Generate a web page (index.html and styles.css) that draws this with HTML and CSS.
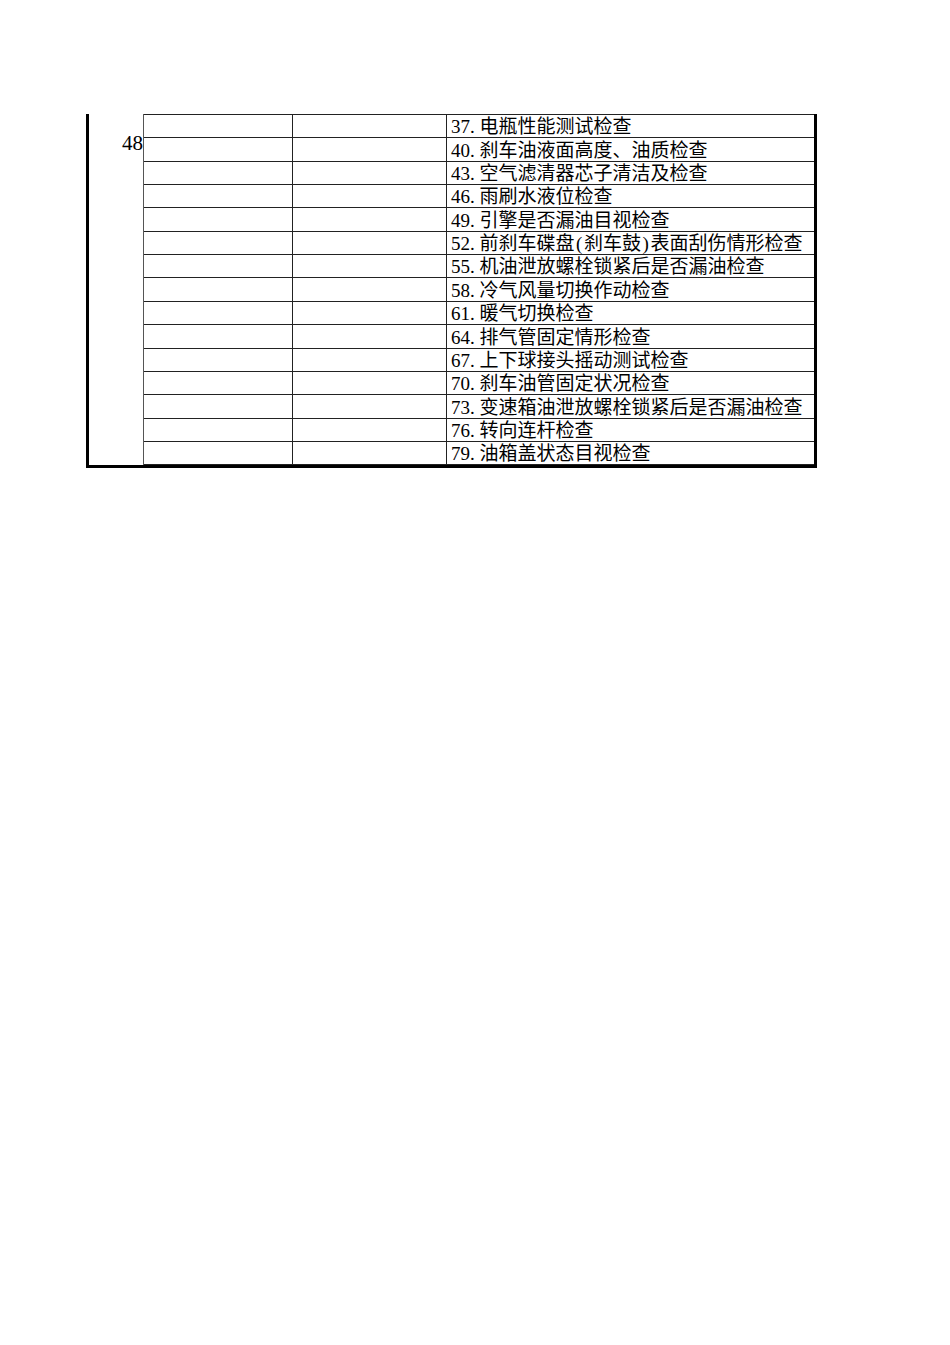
FILE: index.html
```html
<!DOCTYPE html>
<html lang="zh-CN">
<head>
<meta charset="utf-8">
<title>检查表</title>
<link rel="stylesheet" href="styles.css">
</head>
<body>
<div class="sheet">
  <div class="merged"><span class="num">48</span></div>

  <div class="cell first"></div><div class="cell first"></div><div class="cell item first">37. 电瓶性能测试检查</div>
  <div class="cell"></div><div class="cell"></div><div class="cell item">40. 刹车油液面高度、油质检查</div>
  <div class="cell"></div><div class="cell"></div><div class="cell item">43. 空气滤清器芯子清洁及检查</div>
  <div class="cell"></div><div class="cell"></div><div class="cell item">46. 雨刷水液位检查</div>
  <div class="cell"></div><div class="cell"></div><div class="cell item">49. 引擎是否漏油目视检查</div>
  <div class="cell"></div><div class="cell"></div><div class="cell item">52. 前刹车碟盘<span class="p">(</span>刹车鼓<span class="p">)</span>表面刮伤情形检查</div>
  <div class="cell"></div><div class="cell"></div><div class="cell item">55. 机油泄放螺栓锁紧后是否漏油检查</div>
  <div class="cell"></div><div class="cell"></div><div class="cell item">58. 冷气风量切换作动检查</div>
  <div class="cell"></div><div class="cell"></div><div class="cell item">61. 暖气切换检查</div>
  <div class="cell"></div><div class="cell"></div><div class="cell item">64. 排气管固定情形检查</div>
  <div class="cell"></div><div class="cell"></div><div class="cell item">67. 上下球接头摇动测试检查</div>
  <div class="cell"></div><div class="cell"></div><div class="cell item">70. 刹车油管固定状况检查</div>
  <div class="cell"></div><div class="cell"></div><div class="cell item">73. 变速箱油泄放螺栓锁紧后是否漏油检查</div>
  <div class="cell"></div><div class="cell"></div><div class="cell item">76. 转向连杆检查</div>
  <div class="cell"></div><div class="cell"></div><div class="cell item">79. 油箱盖状态目视检查</div>
</div>
</body>
</html>
```
FILE: styles.css
```css
* { box-sizing: border-box; }
html, body { margin: 0; padding: 0; background: #fff; }
body {
  font-family: "Liberation Serif", "Noto Sans CJK SC", serif;
  color: #000;
}
.sheet {
  margin: 114px 0 0 86px;
  width: 731px;
  display: grid;
  grid-template-columns: 55px 149px 154px 367px;
  grid-template-rows: 24.2px repeat(14, 23.38px);
  border-left: 3px solid #000;
  border-right: 3px solid #000;
  border-bottom: 3px solid #000;
}
.merged {
  grid-column: 1;
  grid-row: 1 / -1;
  border-right: 1px solid #555;
  text-align: right;
  padding-top: 19px;
}
.num {
  font-size: 21px;
  line-height: 21px;
  display: inline-block;
}
.cell {
  border-bottom: 1px solid #222;
  border-right: 1px solid #222;
}
.cell.first { border-top: 1px solid #222; }
.cell.item {
  border-right: none;
  font-size: 19px;
  line-height: 20px;
  padding-left: 4px;
  display: flex;
  align-items: flex-end;
  white-space: nowrap;
}
.p {
  display: inline-block;
  width: 0.5em;
  text-align: center;
}
```
